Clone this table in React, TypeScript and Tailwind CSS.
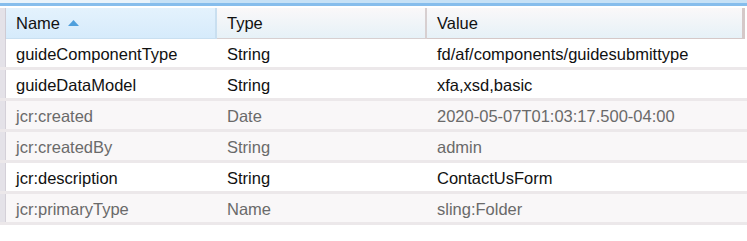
const rows = [
  { n: "guideComponentType", t: "String", v: "fd/af/components/guidesubmittype", dim: false },
  { n: "guideDataModel", t: "String", v: "xfa,xsd,basic", dim: false },
  { n: "jcr:created", t: "Date", v: "2020-05-07T01:03:17.500-04:00", dim: true },
  { n: "jcr:createdBy", t: "String", v: "admin", dim: true },
  { n: "jcr:description", t: "String", v: "ContactUsForm", dim: false },
  { n: "jcr:primaryType", t: "Name", v: "sling:Folder", dim: true },
];

export default function App() {
  return (
    <div className="w-[747px] h-[241px] bg-white overflow-hidden" style={{ fontFamily: '"Liberation Sans", Arial, sans-serif' }}>
      <div className="flex h-[3px]">
        <div className="w-[150px] bg-[#e9f3fb]" />
        <div className="flex-1 bg-[#c6e1f6]" />
      </div>
      <div className="h-[3px] bg-[#86bdec]" />
      <div className="h-[2px]" />

      <div className="flex h-[31px] text-[16.5px] text-[#111]">
        <div className="w-[6px] bg-[#e4e2e8] border-r border-[#cfcbd3]" />
        <div className="w-[211px] flex items-center gap-2 pl-[10px] pt-[1px] bg-gradient-to-b from-[#e4f2fd] to-[#d6ebfb] border-r-2 border-b border-[#c9dff0]">
          <span>Name</span>
          <svg width="11" height="6" viewBox="0 0 11 6" className="mt-[-1px]">
            <polygon points="0,6 5.5,0 11,6" fill="#4f9fdc" />
          </svg>
        </div>
        <div className="w-[210px] flex items-center pl-[10px] pt-[1px] bg-gradient-to-b from-[#faf8f9] to-[#e6f1f7] border-r-2 border-b border-[#d7cfd0]">
          Type
        </div>
        <div className="w-[318px] flex items-center pl-[10px] pt-[1px] bg-gradient-to-b from-[#faf8f9] to-[#e6f1f7] border-r-[3px] border-b border-[#d5c8c8]">
          Value
        </div>
      </div>

      {rows.map((r) => (
        <div key={r.n} className={`flex h-[31px] text-[16.5px] border-b-[3px] border-[#ece8ea] ${r.dim ? "bg-[#f9f7f8] text-[#6a6a6a]" : "bg-white text-[#111]"}`}>
          <div className="w-[6px] bg-[#e4e2e8] border-r border-[#d4d0d8]" />
          <div className="w-[211px] flex items-center pl-[10px] pt-[2px]">{r.n}</div>
          <div className="w-[210px] flex items-center pl-[10px] pt-[2px]">{r.t}</div>
          <div className="flex-1 flex items-center pl-[10px] pt-[2px]">{r.v}</div>
        </div>
      ))}
    </div>
  );
}
